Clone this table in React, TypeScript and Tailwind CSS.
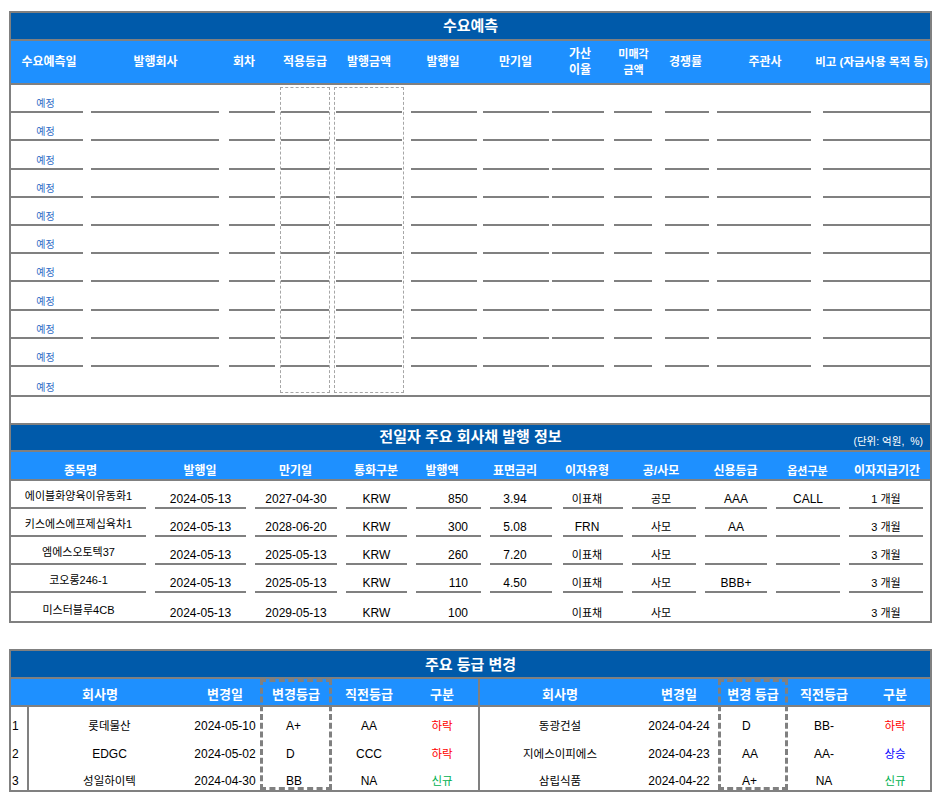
import React from "react";

const FONT = "font-['Liberation_Sans','Noto_Sans_CJK_KR',sans-serif]";

const isKo = (s: string) => /[가-힣]/.test(s);

type DemandCol = { w: string; ul: string; label: string; head?: string; dashed?: boolean };

const demandCols: DemandCol[] = [
  { w: "w-[76px]", ul: "ml-0 mr-[4px]", label: "수요예측일" },
  { w: "w-[137px]", ul: "ml-[4px] mr-[5px]", label: "발행회사" },
  { w: "w-[54px]", ul: "ml-[5px] mr-[3px]", label: "회차", head: "pr-[14px]" },
  { w: "w-[54px]", ul: "ml-[3px] mr-[3px]", label: "적용등급", dashed: true },
  { w: "w-[74px]", ul: "ml-[4px] mr-[4px]", label: "발행금액", dashed: true },
  { w: "w-[74px]", ul: "ml-[5px] mr-[3px]", label: "발행일" },
  { w: "w-[71px]", ul: "ml-[3px] mr-[2px]", label: "만기일" },
  { w: "w-[58px]", ul: "ml-[1px] mr-[5px]", label: "가산\n이율" },
  { w: "w-[49px]", ul: "ml-[5px] mr-[6px]", label: "미매각\n금액", head: "text-[11px]" },
  { w: "w-[55px]", ul: "ml-[7px] mr-[4px]", label: "경쟁률" },
  { w: "w-[104px]", ul: "ml-[4px] mr-[6px]", label: "주관사" },
  { w: "w-[113px]", ul: "ml-[6px] mr-0", label: "비고 (자금사용 목적 등)", head: "text-[11.5px] pr-[4px]" },
];

type IssueCol = { w: string; ul: string; label: string; head?: string; cell?: string };

const issueCols: IssueCol[] = [
  { w: "w-[139px]", ul: "ml-0 mr-[4px]", label: "종목명", cell: "justify-center pb-[4px]" },
  { w: "w-[100px]", ul: "ml-[5px] mr-[4px]", label: "발행일" },
  { w: "w-[91px]", ul: "ml-[5px] mr-[4px]", label: "만기일" },
  { w: "w-[70px]", ul: "ml-[5px] mr-[4px]", label: "통화구분" },
  { w: "w-[74px]", ul: "ml-[5px] mr-[4px]", label: "발행액", head: "pr-[12px]", cell: "justify-end pr-[13px]" },
  { w: "w-[72px]", ul: "ml-[5px] mr-[5px]", label: "표면금리", head: "pr-[12px]", cell: "justify-center pr-[12px]" },
  { w: "w-[70px]", ul: "ml-[6px] mr-[4px]", label: "이자유형", head: "pr-[10px]", cell: "justify-center pr-[12px]" },
  { w: "w-[73px]", ul: "ml-[5px] mr-[4px]", label: "공/사모", head: "pr-[5px]", cell: "justify-center pr-[6px]" },
  { w: "w-[71px]", ul: "ml-[5px] mr-[4px]", label: "신용등급" },
  { w: "w-[73px]", ul: "ml-[5px] mr-[4px]", label: "옵션구분", head: "text-[11px]" },
  { w: "w-[86px]", ul: "ml-[5px] mr-[7px]", label: "이자지급기간" },
];

const issues: string[][] = [
  ["에이블화양육이유동화1", "2024-05-13", "2027-04-30", "KRW", "850", "3.94", "이표채", "공모", "AAA", "CALL", "1 개월"],
  ["키스에스에프제십육차1", "2024-05-13", "2028-06-20", "KRW", "300", "5.08", "FRN", "사모", "AA", "", "3 개월"],
  ["엠에스오토텍37", "2024-05-13", "2025-05-13", "KRW", "260", "7.20", "이표채", "사모", "", "", "3 개월"],
  ["코오롱246-1", "2024-05-13", "2025-05-13", "KRW", "110", "4.50", "이표채", "사모", "BBB+", "", "3 개월"],
  ["미스터블루4CB", "2024-05-13", "2029-05-13", "KRW", "100", "", "이표채", "사모", "", "", "3 개월"],
];

type GradeCol = { w: string; label: string; head?: string; cell?: string; dashed?: boolean };

const leftCols: GradeCol[] = [
  { w: "w-[18px]", label: "", cell: "justify-start pl-[1px] border-r-2 border-[#808080]" },
  { w: "w-[161px]", label: "회사명", head: "pr-[19px]" },
  { w: "w-[70px]", label: "변경일" },
  { w: "w-[72px]", label: "변경등급", dashed: true, cell: "justify-start pl-[26px]" },
  { w: "w-[74px]", label: "직전등급" },
  { w: "w-[72px]", label: "구분" },
];

const rightCols: GradeCol[] = [
  { w: "w-[160px]", label: "회사명" },
  { w: "w-[78px]", label: "변경일" },
  { w: "w-[70px]", label: "변경 등급", dashed: true, cell: "justify-start pl-[24px]" },
  { w: "w-[72px]", label: "직전등급" },
  { w: "w-[70px]", label: "구분" },
];

const leftRows = [
  ["1", "롯데물산", "2024-05-10", "A+", "AA", "하락"],
  ["2", "EDGC", "2024-05-02", "D", "CCC", "하락"],
  ["3", "성일하이텍", "2024-04-30", "BB", "NA", "신규"],
];

const rightRows = [
  ["동광건설", "2024-04-24", "D", "BB-", "하락"],
  ["지에스이피에스", "2024-04-23", "AA", "AA-", "상승"],
  ["삼립식품", "2024-04-22", "A+", "NA", "신규"],
];

const rowHeights = ["h-[28px]", "h-[28px]", "h-[27px]"];

function statusColor(s: string) {
  if (s === "하락") return "text-[#ff0000]";
  if (s === "상승") return "text-[#0000ff]";
  if (s === "신규") return "text-[#00b050]";
  return "text-black";
}

function GradeHalf({ cols, rows }: { cols: GradeCol[]; rows: string[][] }) {
  return (
    <div className="flex">
      {cols.map((col, ci) => (
        <div
          key={ci}
          className={`${col.w} flex flex-col ${
            col.dashed ? "outline-3 outline-dashed outline-[#808080] -outline-offset-3" : ""
          }`}
        >
          <div
            className={`h-[28px] border-b-2 border-[#808080] bg-[#1e90ff] flex items-end justify-center pb-[1px] text-white font-bold text-[13px] leading-[18px] whitespace-nowrap ${
              col.head ?? ""
            }`}
          >
            {col.label}
          </div>
          {rows.map((row, ri) => {
            const v = row[ci];
            const last = ci === cols.length - 1;
            return (
              <div
                key={ri}
                className={`${rowHeights[ri]} flex items-end pb-[2px] whitespace-nowrap leading-[14px] ${
                  col.cell ?? "justify-center"
                } ${isKo(v) ? "text-[11.5px]" : "text-[12px]"} ${last ? statusColor(v) : "text-black"}`}
              >
                {v}
              </div>
            );
          })}
        </div>
      ))}
    </div>
  );
}

export default function App() {
  return (
    <div className={`w-[946px] h-[796px] bg-white pt-[11px] pl-[9px] overflow-hidden ${FONT}`}>
      {/* 수요예측 + 전일자 발행 정보 */}
      <div className="w-[923px] border-2 border-[#808080]">
        <div className="h-[28px] border-b-2 border-[#808080] bg-[#005aaa] flex items-center justify-center text-white font-bold text-[15px]">
          수요예측
        </div>
        <div className="h-[44px] border-b-2 border-[#808080] bg-[#1e90ff] flex">
          {demandCols.map((c, i) => (
            <div
              key={i}
              className={`${c.w} flex items-center justify-center text-center text-white font-bold leading-[16px] whitespace-pre ${
                c.head?.includes("text-[") ? "" : "text-[12px]"
              } ${c.head ?? ""}`}
            >
              {c.label}
            </div>
          ))}
        </div>
        <div className="flex">
          {demandCols.map((c, ci) => (
            <div
              key={ci}
              className={`${c.w} flex flex-col ${
                c.dashed ? "outline-1 outline-dashed outline-[#a6a6a6] -outline-offset-3" : ""
              }`}
            >
              {Array.from({ length: 11 }).map((_, ri) => (
                <div key={ri} className="h-[28.2px] flex">
                  <div
                    className={`flex-1 flex items-end justify-center pb-[1px] ${c.ul} ${
                      ri < 10 ? "border-b-2 border-[#808080]" : ""
                    }`}
                  >
                    {ci === 0 && (
                      <span className="text-[10px] leading-[12px] text-[#2e6bc6] pr-[3px]">예정</span>
                    )}
                  </div>
                </div>
              ))}
            </div>
          ))}
        </div>
        <div className="h-[30px] border-y-2 border-[#808080]" />
        <div className="h-[27px] border-b-2 border-[#808080] bg-[#005aaa] grid grid-cols-[1fr_auto_1fr]">
          <div />
          <div className="flex items-center text-white font-bold text-[15px]">전일자 주요 회사채 발행 정보</div>
          <div className="flex items-end justify-end pr-[7px] pb-[2px] text-white text-[10.5px] leading-[14px] whitespace-pre">
            (단위: 억원,  %)
          </div>
        </div>
        <div className="h-[29px] border-b-2 border-[#808080] bg-[#1e90ff] flex">
          {issueCols.map((c, i) => (
            <div
              key={i}
              className={`${c.w} flex items-end justify-center text-white font-bold leading-[16px] whitespace-nowrap ${
                c.head?.includes("text-[11px]") ? "" : "text-[12px]"
              } ${c.head ?? ""}`}
            >
              {c.label}
            </div>
          ))}
        </div>
        {issues.map((row, ri) => (
          <div key={ri} className="h-[28px] flex">
            {issueCols.map((c, ci) => (
              <div key={ci} className={`${c.w} flex`}>
                <div
                  className={`flex-1 flex items-end whitespace-nowrap leading-[14px] text-black ${c.ul} ${
                    c.cell ?? "justify-center pb-[1px]"
                  } ${c.cell && !c.cell.includes("pb-") ? "pb-[1px]" : ""} ${
                    ri < issues.length - 1 ? "border-b-2 border-[#808080]" : ""
                  } ${isKo(row[ci]) ? "text-[11px]" : "text-[12px]"}`}
                >
                  {row[ci]}
                </div>
              </div>
            ))}
          </div>
        ))}
      </div>

      {/* 주요 등급 변경 */}
      <div className="mt-[26px] w-[923px] border-2 border-[#808080]">
        <div className="h-[28px] border-b-2 border-[#808080] bg-[#005aaa] flex items-center justify-center pt-[3px] text-white font-bold text-[15px]">
          주요 등급 변경
        </div>
        <div className="flex">
          <div className="w-[467px]">
            <GradeHalf cols={leftCols} rows={leftRows} />
          </div>
          <div className="flex-1 border-l-2 border-[#808080]">
            <GradeHalf cols={rightCols} rows={rightRows} />
          </div>
        </div>
      </div>
    </div>
  );
}
